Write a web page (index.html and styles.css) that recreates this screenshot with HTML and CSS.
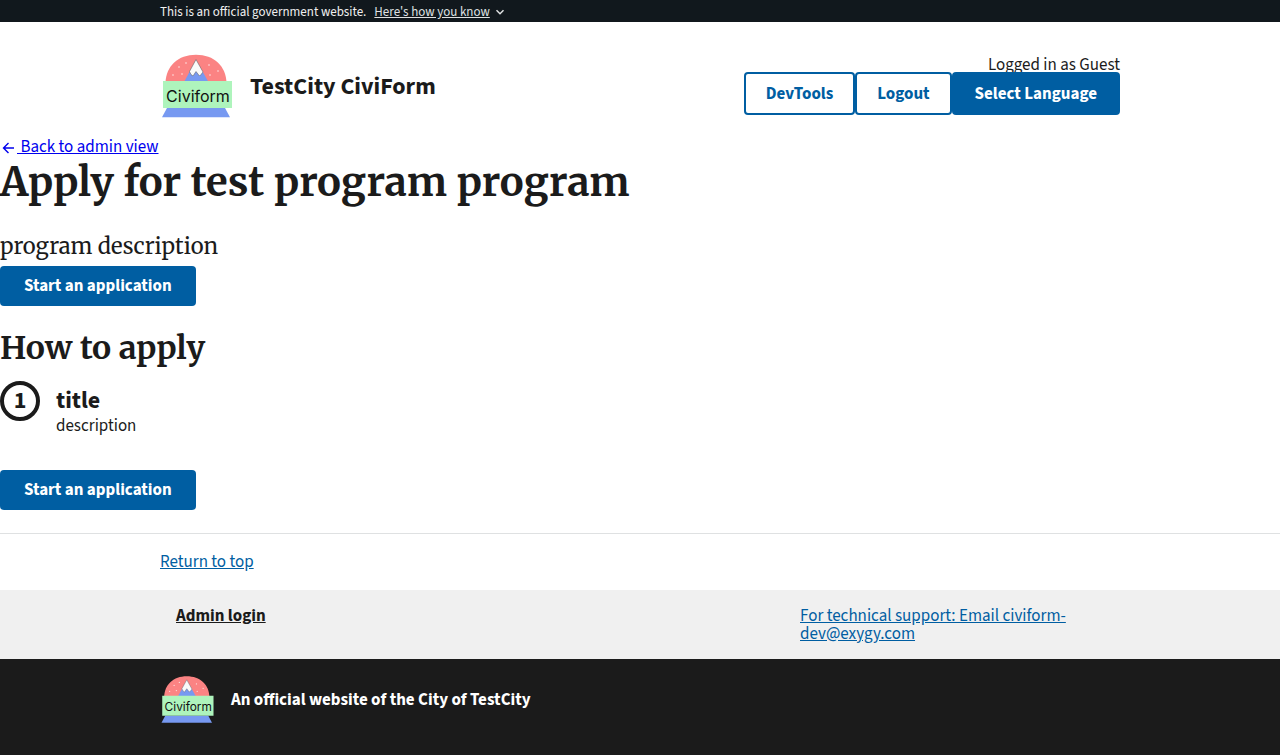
FILE: index.html
```
<!DOCTYPE html>
<html lang="en">
<head>
<meta charset="utf-8">
<title>test program - Program Overview</title>
<link rel="stylesheet" href="styles.css">
</head>
<body id="top">
<svg class="defs" width="0" height="0" aria-hidden="true">
  <symbol id="civiform-logo" viewBox="0 0 74 68">
    <path d="M5.500 31C6 14 18 2.800 36 2.800S66 14 66.500 31Z" fill="#fb8383"/>
    <path d="M23.500 31 36 8 49 31Z" fill="#7799f1"/>
    <path d="M36 7.500 29.500 19.500 31 22.500 33 24 36 19.500 39.500 24 41 22.500 43 20Z" fill="#fafafa" stroke="#555" stroke-width=".5"/>
    <g fill="#fff" opacity=".8"><circle cx="26" cy="11" r=".8"/><circle cx="19" cy="15" r=".8"/><circle cx="13" cy="23" r=".8"/><circle cx="22" cy="22" r=".8"/><circle cx="49" cy="13" r=".8"/><circle cx="58" cy="19" r=".8"/><circle cx="50" cy="23" r=".8"/></g>
    <path d="M7 56H65L70 65.300H2Z" fill="#7799f1"/>
    <path d="M3 29H72V56H3Z" fill="#aef4bc"/>
    <text x="38" y="49.500" text-anchor="middle" font-family="Inter, sans-serif" font-size="16" font-weight="400" fill="#111">Civiform</text>
  </symbol>
</svg>

<section class="banner" aria-label="Official government website">
  <div class="container banner-row">
    <span>This is an official government website.</span>
    <button class="banner-button" type="button"><span class="banner-label">Here's how you know</span>
      <svg class="chevron" viewBox="0 0 12 12" aria-hidden="true"><path d="M2.500 4.200 6 7.700 9.500 4.200" fill="none" stroke="currentColor" stroke-width="1.500"/></svg>
    </button>
  </div>
</section>

<header class="container header">
  <div class="brand">
    <svg class="logo" role="img" aria-label="Civiform"><use href="#civiform-logo"/></svg>
    <span class="brand-name">TestCity CiviForm</span>
  </div>
  <nav class="account">
    <span class="account-name">Logged in as Guest</span>
    <div class="account-actions">
      <a class="button button-outline" href="#dev">DevTools</a>
      <a class="button button-outline" href="#logout">Logout</a>
      <button class="button button-tall" type="button">Select Language</button>
    </div>
  </nav>
</header>

<main>
  <a class="back" href="#admin"><svg class="arrow" viewBox="0 0 17 17" aria-hidden="true"><path d="M14 9H4M8.500 4 3.500 9l5 5" fill="none" stroke="currentColor" stroke-width="1.400"/></svg> Back to admin view</a>
  <h1>Apply for test program program</h1>
  <p class="intro">program description</p>
  <a class="button" href="#start">Start an application</a>
  <h2>How to apply</h2>
  <ol class="steps">
    <li class="step">
      <div class="step-body">
        <h3>title</h3>
        <p>description</p>
      </div>
    </li>
  </ol>
  <a class="button" href="#start">Start an application</a>
</main>

<footer>
  <div class="footer-return"><div class="container"><a class="link" href="#top">Return to top</a></div></div>
  <div class="footer-links">
    <div class="container footer-row">
      <a class="admin-login" href="#login">Admin login</a>
      <a class="link support" href="mailto:civiform-dev@exygy.com">For technical support: Email civiform-dev@exygy.com</a>
    </div>
  </div>
  <div class="footer-agency">
    <div class="container agency">
      <svg class="logo-small" role="img" aria-label="Civiform"><use href="#civiform-logo"/></svg>
      <span>An official website of the City of TestCity</span>
    </div>
  </div>
</footer>
</body>
</html>
```
FILE: styles.css
```
:root {
  --ink: #1b1b1b;
  --primary: #005ea2;
  --serif: Merriweather, "Liberation Serif", serif;
}
*, *::before { box-sizing: border-box; }
html { background: #1b1b1b; }
body {
  margin: 0;
  background: #fff;
  color: var(--ink);
  font: 17px/18px "Source Sans Pro", "Source Sans 3", "Noto Sans CJK SC", "Noto Sans", sans-serif;
}
h1, h2, h3, p { margin: 0; }
.defs { position: absolute; }
.container { max-width: 1024px; margin: 0 auto; padding: 0 32px; }

.banner { background: #11181d; color: #f0f0f0; font-size: 13px; }
.banner-row { display: flex; align-items: center; gap: 8px; padding-top: 3px; padding-bottom: 1px; }
.banner-button {
  display: flex; align-items: center; gap: 4px;
  padding: 0; border: 0; background: none;
  color: #dfe1e2; font: inherit; cursor: pointer;
}
.banner-label { text-decoration: underline; }
.chevron { width: 12px; height: 12px; }

.header { display: flex; justify-content: space-between; align-items: flex-start; padding-top: 30px; padding-bottom: 18px; }
.brand { display: flex; align-items: center; gap: 16px; }
.logo { width: 74px; height: 68px; }
.brand-name { padding-top: 2px; font-size: 24px; line-height: 24px; font-weight: 700; }
.account { display: flex; flex-direction: column; align-items: flex-end; padding-top: 4px; }
.account-name { height: 16px; }
.account-actions { display: flex; }

.button {
  display: inline-block;
  padding: 11px 24px;
  border: 0; border-radius: 4px;
  background: var(--primary); color: #fff;
  font: inherit; font-weight: 700;
  text-decoration: none; cursor: pointer;
}
.button-outline { padding: 13px 22px 12px; background: #fff; color: var(--primary); box-shadow: inset 0 0 0 2px var(--primary); }
.button-tall { padding: 13px 23px 12px; }

.back { display: block; color: #0000ee; }
.arrow { width: 17px; height: 17px; vertical-align: -4px; }
h1, h2, .intro { font-family: var(--serif); }
h1 { font-size: 40px; line-height: 53px; }
.intro { margin-top: 22px; margin-bottom: 4px; font-size: 22px; line-height: 31px; }
h2 { margin: 21px 0 12px; font-size: 32px; line-height: 42px; }
.steps { margin: 0; padding: 0; list-style: none; counter-reset: step; }
.step { display: flex; gap: 16px; counter-increment: step; min-height: 89px; }
.step::before {
  content: counter(step);
  flex: none;
  width: 40px; height: 40px;
  border: 4px solid var(--ink); border-radius: 50%;
  font-size: 24px; line-height: 32px; font-weight: 700; text-align: center;
}
.step-body { padding-top: 4px; }
h3 { font-size: 24px; line-height: 32px; }

.footer-return { margin-top: 23px; padding: 19px 0; border-top: 1px solid #dfe1e2; }
.link { color: var(--primary); }
.footer-links { padding: 17px 0 16px; background: #f0f0f0; }
.footer-row { display: grid; grid-template-columns: 2fr 1fr; }
.admin-login { padding-left: 16px; color: var(--ink); font-weight: 700; }
.support { justify-self: start; max-width: 288px; }
.footer-agency { padding: 15px 0 30px; background: var(--ink); color: #fff; font-weight: 700; }
.agency { display: flex; align-items: center; gap: 16px; }
.logo-small { width: 55px; height: 51px; }
```
